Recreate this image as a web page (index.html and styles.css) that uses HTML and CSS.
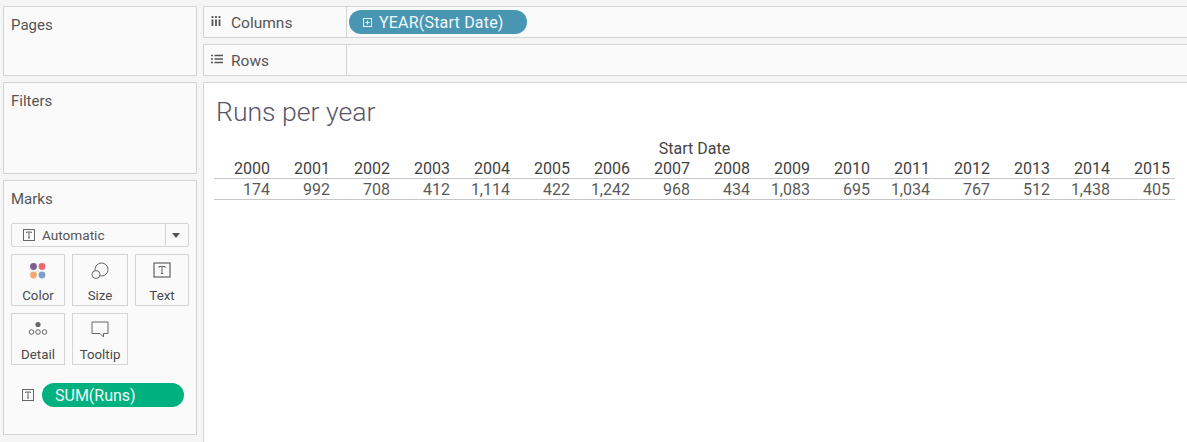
FILE: index.html
```html
<!DOCTYPE html>
<html lang="en">
<head>
<meta charset="utf-8">
<title>Runs per year</title>
<link rel="stylesheet" href="styles.css">
</head>
<body>
<div class="app">
  <aside class="side">
    <section class="card pages"><h2 class="card-title">Pages</h2></section>
    <section class="card filters"><h2 class="card-title">Filters</h2></section>
    <section class="card marks">
      <h2 class="card-title">Marks</h2>
      <div class="select">
        <span class="select-main">
          <svg class="t-icon" width="14" height="14" viewBox="0 0 14 14"><rect x="1.5" y="1.5" width="11" height="11" fill="none" stroke="#666"/><path d="M4.5 5V4h5v1M7 4v6M6 10h2" fill="none" stroke="#666"/></svg>
          Automatic
        </span>
        <span class="select-arrow"></span>
      </div>
      <div class="mark-grid">
        <div class="mark-btn">
          <svg width="18" height="18" viewBox="0 0 18 18"><circle cx="4.5" cy="4.5" r="3.4" fill="#7b5f91"/><circle cx="13" cy="4.5" r="3.4" fill="#f0686f"/><circle cx="4.5" cy="13" r="3.4" fill="#f4a673"/><circle cx="13" cy="13" r="3.4" fill="#7aa0c8"/></svg>
          <span>Color</span>
        </div>
        <div class="mark-btn">
          <svg width="20" height="18" viewBox="0 0 20 18"><circle cx="11.5" cy="7.5" r="6.5" fill="none" stroke="#666"/><circle cx="6" cy="12.5" r="4" fill="#fafafa" stroke="#666"/></svg>
          <span>Size</span>
        </div>
        <div class="mark-btn">
          <svg width="18" height="18" viewBox="0 0 18 18"><rect x="1" y="1" width="16" height="14" fill="none" stroke="#777" stroke-width="1.4"/><path d="M6 6V4.500h6V6M9 4.500v7M7.800 11.500h2.400" fill="none" stroke="#666"/></svg>
          <span>Text</span>
        </div>
        <div class="mark-btn">
          <svg width="20" height="18" viewBox="0 0 20 18"><circle cx="10" cy="3.500" r="2.600" fill="#666"/><circle cx="3.500" cy="11" r="2.300" fill="none" stroke="#666"/><circle cx="10" cy="11" r="2.300" fill="none" stroke="#666"/><circle cx="16.500" cy="11" r="2.300" fill="none" stroke="#666"/></svg>
          <span>Detail</span>
        </div>
        <div class="mark-btn">
          <svg width="18" height="18" viewBox="0 0 18 18"><path d="M1 1h16v11.500h-4.500v3.500l-3.500-3.500H1z" fill="none" stroke="#666"/></svg>
          <span>Tooltip</span>
        </div>
      </div>
      <div class="mark-field">
        <svg class="t-icon" width="14" height="14" viewBox="0 0 14 14"><rect x="1.5" y="1.500" width="11" height="11" fill="none" stroke="#666"/><path d="M4.500 5V4h5v1M7 4v6M6 10h2" fill="none" stroke="#666"/></svg>
        <span class="pill pill-green">SUM(Runs)</span>
      </div>
    </section>
  </aside>
  <main class="main">
    <div class="shelf">
      <div class="shelf-label">
        <span class="shelf-icon"><svg width="10" height="11" viewBox="0 0 10 11"><path d="M1.500 0v2M5 0v2M8.500 0v2M1.500 3.500V10M5 3.500V10M8.500 3.500V10" stroke="#555" stroke-width="1.800" fill="none"/></svg></span>
        <span>Columns</span>
      </div>
      <div class="shelf-body">
        <span class="pill pill-blue">
          <svg width="9" height="9" viewBox="0 0 9 9"><rect x=".5" y=".5" width="8" height="8" fill="none" stroke="#eaf3f7"/><path d="M2.500 4.500h4M4.500 2.500v4" stroke="#eaf3f7"/></svg>
          YEAR(Start Date)
        </span>
      </div>
    </div>
    <div class="shelf">
      <div class="shelf-label">
        <span class="shelf-icon"><svg width="12" height="10" viewBox="0 0 12 10"><path d="M0 1.500h2M0 5h2M0 8.500h2M3.500 1.500H12M3.500 5H12M3.500 8.500H12" stroke="#555" stroke-width="1.500" fill="none"/></svg></span>
        <span>Rows</span>
      </div>
      <div class="shelf-body"></div>
    </div>
    <section class="view">
      <h1 class="view-title">Runs per year</h1>
      <div class="crosstab">
        <div class="axis-title">Start Date</div>
        <div class="row years">
          <span>2000</span><span>2001</span><span>2002</span><span>2003</span><span>2004</span><span>2005</span><span>2006</span><span>2007</span><span>2008</span><span>2009</span><span>2010</span><span>2011</span><span>2012</span><span>2013</span><span>2014</span><span>2015</span>
        </div>
        <div class="row values">
          <span>174</span><span>992</span><span>708</span><span>412</span><span>1,114</span><span>422</span><span>1,242</span><span>968</span><span>434</span><span>1,083</span><span>695</span><span>1,034</span><span>767</span><span>512</span><span>1,438</span><span>405</span>
        </div>
      </div>
    </section>
  </main>
</div>
</body>
</html>
```
FILE: styles.css
```css
* { box-sizing: border-box; }
html, body { margin: 0; height: 100%; }
body {
  background: #f5f5f5;
  color: #4a4a4a;
  font-family: "Roboto", "Liberation Sans", sans-serif;
  font-size: 15px;
  overflow: hidden;
}
.app {
  display: flex;
  gap: 6px;
  height: 442px;
  padding: 6px 0 0 3px;
}
.side {
  display: flex;
  flex-direction: column;
  gap: 6px;
  width: 194px;
  flex: none;
  padding-bottom: 7px;
}
.card {
  background: #fafafa;
  border: 1px solid #d4d4d4;
  padding: 9px 7px 0;
}
.card-title {
  margin: 0;
  font-size: 15px;
  font-weight: 400;
  line-height: 18px;
  color: #555;
}
.pages { height: 70px; }
.filters { height: 92px; }
.marks { flex: 1; }
.select {
  display: flex;
  height: 24px;
  margin: 15px 0 0;
  width: 178px;
  border: 1px solid #d4d4d4;
  border-radius: 2px;
  background: #fafafa;
}
.select-main {
  flex: 1;
  display: flex;
  align-items: center;
  gap: 6px;
  padding-left: 10px;
  font-size: 13.600px;
  color: #555;
  border-right: 1px solid #d4d4d4;
}
.select-arrow {
  width: 22px;
  position: relative;
}
.select-arrow::after {
  content: "";
  position: absolute;
  left: 6px;
  top: 9px;
  border: 4px solid transparent;
  border-top: 5px solid #555;
  border-bottom: 0;
}
.mark-grid {
  display: grid;
  grid-template-columns: 54px 56px 54px;
  grid-auto-rows: 52px;
  column-gap: 7px;
  row-gap: 7px;
  margin: 7px 0 0;
}
.mark-btn {
  display: flex;
  flex-direction: column;
  align-items: center;
  border: 1px solid #d4d4d4;
  padding-top: 7px;
  gap: 8px;
  font-size: 13.300px;
  line-height: 16px;
  color: #4a4a4a;
}
.mark-field {
  display: flex;
  align-items: center;
  gap: 7px;
  margin: 18px 0 0 10px;
}
.pill {
  display: inline-flex;
  align-items: center;
  height: 24px;
  border-radius: 12px;
  color: #f2f7f9;
  font-size: 16px;
}
.pill-green {
  width: 142px;
  background: #00b180;
  padding-left: 13px;
}
.pill-blue {
  width: 178px;
  gap: 7px;
  background: #4996b2;
  padding-left: 14px;
  letter-spacing: .2px;
}
.main {
  flex: 1;
  min-width: 0;
  display: flex;
  flex-direction: column;
  gap: 6px;
}
.shelf {
  display: flex;
  height: 32px;
  background: #fafafa;
  border: 1px solid #d4d4d4;
  border-right: 0;
}
.shelf-label {
  width: 143px;
  flex: none;
  display: flex;
  align-items: center;
  padding: 2px 0 0 7px;
  border-right: 1px solid #d4d4d4;
  color: #555;
  font-size: 15.500px;
}
.shelf-icon {
  width: 20px;
  display: flex;
  align-items: center;
  margin-top: -4px;
}
.shelf-body {
  flex: 1;
  display: flex;
  align-items: center;
  padding-left: 2px;
}
.view {
  flex: 1;
  background: #fff;
  border: 1px solid #d4d4d4;
  border-right: 0;
  border-bottom: 0;
  padding: 13px 12px 0 10px;
}
.view-title {
  margin: 0 0 0 2px;
  font-weight: 300;
  font-size: 26.600px;
  line-height: 32px;
  color: #5a5568;
}
.crosstab {
  margin-top: 11px;
  color: #444;
  font-size: 16px;
}
.axis-title {
  text-align: center;
  line-height: 20px;
}
.row {
  display: grid;
  grid-template-columns: 61px repeat(15, 60px);
  justify-items: end;
  line-height: 20px;
}
.row span { padding-right: 5px; }
.years { height: 20px; color: #3f3f3f; border-bottom: 1px solid #c8c8c8; }
.values { height: 21px; border-bottom: 1px solid #c8c8c8; color: #5a5a5a; line-height: 21px; }
```
